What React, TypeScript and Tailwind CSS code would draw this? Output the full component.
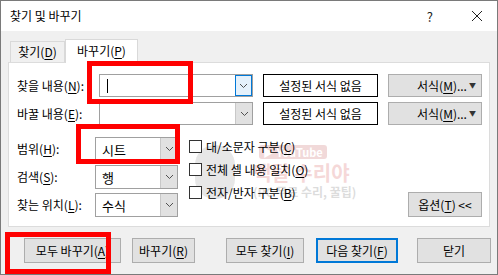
import React from 'react';

// 밑줄 단축키 글자
const Mn = ({ c }: { c: string }) => <span className="underline underline-offset-[2px]">{c}</span>;

const Chevron = () => (
  <svg width="9" height="6" viewBox="0 0 9 6" className="text-[#505050]">
    <polyline points="1,1 4.5,4.5 8,1" fill="none" stroke="currentColor" strokeWidth="1" />
  </svg>
);

function Combo({ w, h, value, focused, caret }: { w: string; h: string; value?: string; focused?: boolean; caret?: boolean }) {
  return (
    <div className={`flex ${w} ${h} border border-[#a0a0a0] bg-white`}>
      <div className="flex flex-1 items-center pl-[6px] text-[13px] leading-none text-black">
        {caret && <span className="ml-[1px] block h-[14px] w-[1px] bg-black" />}
        {value}
      </div>
      {focused ? (
        <div className="flex w-[17px] items-center justify-center border border-[#0078d7] bg-[#e5f1fb]">
          <Chevron />
        </div>
      ) : (
        <div className="flex w-[17px] items-center justify-center border-l border-[#c8c8c8] bg-[#e1e1e1]">
          <Chevron />
        </div>
      )}
    </div>
  );
}

function Btn({ w, children, primary }: { w: string; children: React.ReactNode; primary?: boolean }) {
  return (
    <div
      className={`flex h-[25px] ${w} items-center justify-center bg-[#e1e1e1] text-[12px] leading-none text-black ${
        primary ? 'border-2 border-[#0078d7]' : 'border border-[#adadad]'
      }`}
    >
      {children}
    </div>
  );
}

function Check({ children }: { children: React.ReactNode }) {
  return (
    <div className="flex h-[13px] items-center">
      <div className="h-[13px] w-[13px] border border-[#333333] bg-white" />
      <span className="ml-[4px] text-[12px] leading-none text-black">{children}</span>
    </div>
  );
}

export default function App() {
  return (
    <div className="relative h-[275px] w-[498px] overflow-hidden border border-[#7a7a7a] bg-[#f0f0f0] font-['Noto_Sans_CJK_KR','Noto_Sans',sans-serif]">
      {/* 제목 표시줄 */}
      <div className="flex h-[30px] items-center bg-white pl-[9px] pr-[14px]">
        <span className="text-[12px] leading-none text-black">찾기 및 바꾸기</span>
        <span className="ml-auto text-[13px] leading-none text-[#222]">?</span>
        <svg width="12" height="12" viewBox="0 0 12 12" className="ml-[38px]">
          <path d="M1 1 L11 11 M11 1 L1 11" stroke="#222" strokeWidth="1" />
        </svg>
      </div>

      {/* 탭 */}
      <div className="mt-[8px] flex h-[23px] items-end pl-[9px]">
        <div className="flex h-[21px] w-[55px] items-center justify-center border border-b-0 border-[#d9d9d9] bg-[#f0f0f0] text-[12px] leading-none">
          찾기(<Mn c="D" />)
        </div>
        <div className="relative z-10 -mb-px flex h-[24px] w-[73px] items-center justify-center border border-b-0 border-[#d9d9d9] bg-white pb-[2px] text-[12px] leading-none">
          바꾸기(<Mn c="P" />)
        </div>
      </div>

      {/* 탭 패널 */}
      <div className="relative ml-[7px] h-[165px] w-[482px] border border-[#dcdcdc] bg-white pl-[8px] pr-[7px] pt-[11px]">
        {/* 워터마크 (내용 뒤) */}
        <div className="pointer-events-none absolute left-[186px] top-[82px] flex items-center opacity-20">
          <div className="h-[54px] w-[40px] rounded-full bg-[#8a8a8a]" />
          <div className="ml-[18px] flex flex-col items-start">
            <span className="ml-[6px] rounded-[3px] bg-[#b44] px-[4px] text-[11px] font-bold leading-[14px] text-white">▶ YouTube</span>
            <span className="mt-[2px] text-[20px] font-bold leading-[24px] text-[#d04040]">맥탈 수리야</span>
            <span className="text-[12px] font-bold leading-[14px] text-[#555]">(PC 무료 수리, 꿀팁)</span>
          </div>
        </div>

        <div className="relative z-10 flex flex-col gap-[5px]">
          <div className="flex items-center">
            <span className="w-[82px] text-[12px] leading-none">찾을 내용(<Mn c="N" />):</span>
            <Combo w="w-[154px]" h="h-[23px]" focused caret />
            <div className="ml-[10px] flex h-[23px] w-[115px] items-center justify-center border border-black bg-white text-[12px] leading-none">
              설정된 서식 없음
            </div>
            <div className="ml-[10px] flex h-[23px] w-[94px] items-center border border-[#adadad] bg-[#e1e1e1] pl-[28px] pr-[5px] text-[12px] leading-none">
              서식(<Mn c="M" />)...
              <span className="ml-auto text-[7px] text-[#333]">▼</span>
            </div>
          </div>
          <div className="flex items-center">
            <span className="w-[82px] text-[12px] leading-none">바꿀 내용(<Mn c="E" />):</span>
            <Combo w="w-[154px]" h="h-[23px]" />
            <div className="ml-[10px] flex h-[23px] w-[115px] items-center justify-center border border-black bg-white text-[12px] leading-none">
              설정된 서식 없음
            </div>
            <div className="ml-[10px] flex h-[23px] w-[94px] items-center border border-[#adadad] bg-[#e1e1e1] pl-[28px] pr-[5px] text-[12px] leading-none">
              서식(<Mn c="M" />)...
              <span className="ml-auto text-[7px] text-[#333]">▼</span>
            </div>
          </div>
        </div>

        <div className="relative z-10 mt-[12px] flex">
          <div className="flex flex-col gap-[4px]">
            <div className="flex items-center">
              <span className="w-[78px] text-[12px] leading-none">범위(<Mn c="H" />):</span>
              <Combo w="w-[83px]" h="h-[24px]" value="시트" />
            </div>
            <div className="flex items-center">
              <span className="w-[78px] text-[12px] leading-none">검색(<Mn c="S" />):</span>
              <Combo w="w-[83px]" h="h-[24px]" value="행" />
            </div>
            <div className="flex items-center">
              <span className="w-[78px] text-[12px] leading-none">찾는 위치(<Mn c="L" />):</span>
              <Combo w="w-[83px]" h="h-[24px]" value="수식" />
            </div>
          </div>
          <div className="ml-[11px] mt-[3px] flex flex-col gap-[10px]">
            <Check>대/소문자 구분(<Mn c="C" />)</Check>
            <Check>전체 셀 내용 일치(<Mn c="O" />)</Check>
            <Check>전자/반자 구분(<Mn c="B" />)</Check>
          </div>
          <div className="flex flex-1 items-end justify-end">
            <div className="flex h-[25px] w-[74px] items-center justify-center border border-[#adadad] bg-[#e1e1e1] text-[12px] leading-none">
              옵션(<Mn c="T" />) &lt;&lt;
            </div>
          </div>
        </div>
      </div>

      {/* 하단 버튼 */}
      <div className="mt-[11px] flex items-center pl-[23px]">
        <Btn w="w-[97px]">모두 바꾸기(<Mn c="A" />)</Btn>
        <div className="ml-[11px]">
          <Btn w="w-[63px]">바꾸기(<Mn c="R" />)</Btn>
        </div>
        <div className="ml-[31px]">
          <Btn w="w-[78px]">모두 찾기(<Mn c="I" />)</Btn>
        </div>
        <div className="ml-[12px]">
          <Btn w="w-[82px]" primary>다음 찾기(<Mn c="F" />)</Btn>
        </div>
        <div className="ml-[19px]">
          <Btn w="w-[74px]">닫기</Btn>
        </div>
      </div>

      {/* 빨간 강조 상자 */}
      <div className="pointer-events-none absolute left-[86px] top-[60px] z-20 h-[43px] w-[106px] border-[5px] border-[#ff0000]" />
      <div className="pointer-events-none absolute left-[75px] top-[123px] z-20 h-[40px] w-[104px] border-[5px] border-[#ff0000]" />
      <div className="pointer-events-none absolute left-[4px] top-[231px] z-20 h-[42px] w-[106px] border-[5px] border-[#ff0000]" />
    </div>
  );
}
